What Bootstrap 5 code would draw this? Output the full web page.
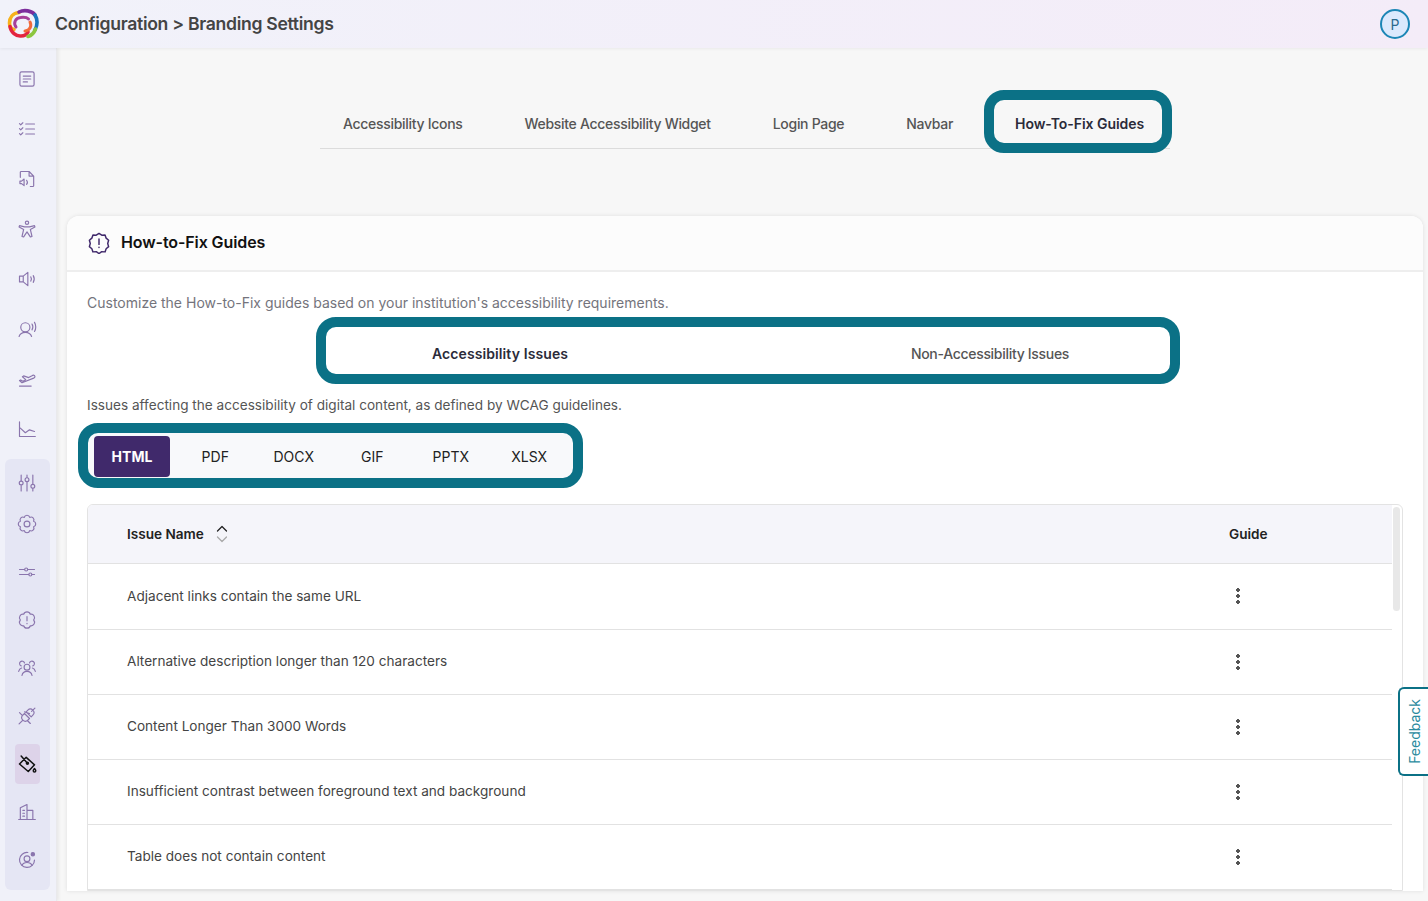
<!DOCTYPE html>
<html lang="en">
<head>
    <meta charset="UTF-8">
    <meta name="viewport" content="width=device-width, initial-scale=1.0">
    <title>Branding Settings</title>
    <link rel="stylesheet" href="https://cdn.jsdelivr.net/npm/bootstrap@5.3.0/dist/css/bootstrap.min.css">
    <style>
        html, body { height: 100%; overflow: hidden; }
        body { font-family: Inter, "Liberation Sans", sans-serif; font-size: 14px; background: #f7f7f7; color: #212529; }

        .topbar { height: 48px; background: linear-gradient(90deg, #f1f2fa, #f4ecf8); box-shadow: 0 1px 3px rgba(0,0,0,.06); position: relative; z-index: 2; padding: 0 18px 0 7px; }
        .page-title { font-size: 17.6px; font-weight: 600; color: #444; margin-left: 16px; letter-spacing: -.3px; }
        .avatar { width: 30px; height: 30px; background: #dbe9fd; border: 2px solid #1c86b6; color: #2b6a8e; font-size: 14px; }

        .sidebar { width: 57px; background: #f0f1f9; border-right: 1px solid #e9e9ec; box-shadow: 2px 0 3px rgba(0,0,0,.06); flex-shrink: 0; padding: 6px 0 0 5px; }
        .side-item { width: 45px; height: 50px; padding-right: 1px; }
        .side-item svg { width: 20px; height: 20px; fill: none; stroke: #8a75ad; stroke-width: 1.4; stroke-linecap: round; stroke-linejoin: round; }
        .side-group { width: 45px; height: 431px; margin-top: 5px; background: #e5e6f4; border-radius: 6px; padding-top: 7px; }
        .side-group .side-item { height: 48px; }
        .side-group .side-item:first-child { height: 34px; }
        .side-group .side-item.active svg { stroke: #111; stroke-width: 1.8; }
        .side-active { width: 25px; height: 40px; background: #ddd3e9; border-radius: 4px; }

        .main { min-width: 0; overflow: hidden; padding: 42px 5px 0 10px; }

        .page-tabs { width: 850px; margin-left: 253px; height: 59px; border-bottom: 1px solid #dcdcdc; }
        .page-tabs .tab { padding: 13px 31px 0; height: 48px; margin-top: 10px; font-weight: 500; color: #555; letter-spacing: -.3px; white-space: nowrap; }
        .page-tabs .tab:first-child { padding-left: 23px; }
        .page-tabs .tab.active { color: #2b2b3a; font-weight: 600; letter-spacing: -.05px; }
        .callout { position: absolute; border: 10px solid #0b7186; border-radius: 20px; pointer-events: none; }
        .tab-callout { top: -10px; bottom: -5px; left: 0; right: 3px; }

        .guide-card { margin-top: 67px; background: #fff; border: 0; border-radius: 12px 12px 0 0; box-shadow: 0 0 4px rgba(0,0,0,.1); }
        .guide-card .card-header { height: 56px; background: #fcfcfc; border-bottom: 2px solid #eeeeee; padding: 0 21px; border-radius: 12px 12px 0 0; }
        .guide-card h1 { font-size: 16px; font-weight: 600; color: #111; margin: 0 0 0 11px; letter-spacing: -.1px; }
        .guide-card .card-body { padding: 21px 20px 0; }
        .lead-text { color: #74747c; line-height: 20px; margin: 0; }

        .type-tabs { position: relative; height: 67px; margin-top: 4px; }
        .type-tabs > div { width: 490px; padding-top: 27px; line-height: 20px; font-weight: 500; color: #555; letter-spacing: -.3px; }
        .type-tabs > div.active { font-weight: 600; color: #2b2b3a; letter-spacing: .1px; }
        .type-callout { top: 0; bottom: 0; left: 229px; right: 223px; }

        .scope-text { color: #555; font-size: 13.6px; line-height: 20px; margin: 11px 0 8px; }
        .format-tabs { width: 505px; height: 65px; margin-left: -9px; border: 10px solid #0b7186; border-radius: 20px; background: #f8f9fb; padding: 3px 0 0 6px; }
        .format-tabs button { width: 78.5px; height: 41px; background: none; border: 0; padding: 0; color: #222; font-size: 14px; }
        .format-tabs button.active { width: 76px; margin-right: 6px; background: #40296b; color: #fff; font-weight: 700; border-radius: 4px; }

        .issue-box { position: relative; margin-top: 16px; border: 1px solid #e3e3e3; border-radius: 6px 6px 0 0; padding-right: 10px; overflow: hidden; }
        .issue-box table { margin: 0; font-size: 13.6px; }
        .issue-box th, .issue-box td { padding: 0 0 0 39px; vertical-align: middle; border-bottom: 1px solid #e2e2e2; color: #444; font-weight: 400; }
        .issue-box thead th { height: 58px; background: #f5f5fa; color: #222; font-weight: 600; }
        .issue-box tbody td { height: 65px; }
        .issue-box tbody tr:first-child td { height: 66px; }
        .issue-box .guide-col { width: 202px; }
        .sort-mark { width: 12px; height: 18px; margin-left: 12px; fill: none; stroke-width: 1.3; stroke-linecap: round; stroke-linejoin: round; }
        .dots { display: block; width: 4px; height: 16px; margin-left: 7px; background: radial-gradient(circle at 2px 2px, #555 1.8px, transparent 2.1px) 0 0 / 4px 6px; }
        .scroll-thumb { position: absolute; top: 2px; right: 2px; width: 7px; height: 104px; background: #e8e8e8; border-radius: 4px; }

        .feedback { position: fixed; right: 0; top: 687px; width: 30px; height: 89px; background: #fff; border: 2px solid #0b7186; border-right: 0; border-radius: 6px 0 0 6px; color: #2a8a9e; z-index: 3; }
        .feedback span { writing-mode: vertical-rl; transform: rotate(180deg); font-size: 14px; }
    </style>
</head>
<body class="d-flex flex-column">
    <header class="topbar d-flex align-items-center flex-shrink-0">
        <svg width="32" height="32" viewBox="0 0 32 32" fill="none" stroke-width="3.6" stroke-linecap="round" aria-label="logo">
            <path d="M12 4.500C6 5 2.500 9.500 2.500 15c0 3.500 2 6 4.500 6.500" stroke="#f7b21b"/>
            <path d="M3 18.500c1 6 6 10 11 9.500 4 0 6-2 7-4" stroke="#e3243f"/>
            <path d="M12 4c5-2.500 13-1.500 16 3" stroke="#7c2d9c"/>
            <path d="M28 7c3 5 2 11 0 15" stroke="#1b75bb"/>
            <path d="M28.500 21c-1.500 4-4 6.500-7.500 7.500" stroke="#8cc63f"/>
            <path d="M9 19c-3-4-.5-9 4.500-9.500 4-.5 7 .500 8 1.500" stroke="#a63f98" stroke-width="3"/>
            <path d="M23 14c2 4 0 8.500-5 9" stroke="#f26b3a" stroke-width="3"/>
        </svg>
        <div class="page-title">Configuration &gt; Branding Settings</div>
        <div class="avatar rounded-circle d-flex align-items-center justify-content-center ms-auto">P</div>
    </header>

    <div class="d-flex flex-grow-1" style="min-height:0">
        <nav class="sidebar">
            <div class="side-item d-flex align-items-center justify-content-center"><svg viewBox="0 0 24 24"><rect x="3.500" y="3.500" width="17" height="17" rx="2"/><path d="M7.500 8.500h9M7.500 12h9M7.500 15.500h5"/></svg></div>
            <div class="side-item d-flex align-items-center justify-content-center"><svg viewBox="0 0 24 24"><path d="M3 5.500l1.500 1.500 2.500-2.500M3 11.500l1.500 1.500 2.500-2.500M3 17.500l1.500 1.500 2.500-2.500M10.500 6h10.500M10.500 12h10.500M10.500 18h10.500"/></svg></div>
            <div class="side-item d-flex align-items-center justify-content-center"><svg viewBox="0 0 24 24"><path d="M4 10V4a1 1 0 0 1 1-1h9.500L20 8.500V20a1 1 0 0 1-1 1h-3M14.500 3v5.500H20M3.500 14.500h2l3-2.500v8l-3-2.500h-2zM11.500 13.500c1.200 1.500 1.200 3.500 0 5"/></svg></div>
            <div class="side-item d-flex align-items-center justify-content-center"><svg viewBox="0 0 24 24"><circle cx="12" cy="4.500" r="2"/><path d="M3 8l6 1.500h6L21 8l.5 1.500-5.500 3 2 8.500-2 .5-4-6-4 6-2-.5 2-8.500-5.500-3z"/></svg></div>
            <div class="side-item d-flex align-items-center justify-content-center"><svg viewBox="0 0 24 24"><path d="M3 8.500h4.500L13 4v16l-5.500-4.500H3zM7.500 8.500v7M16.500 9.500c1 1.500 1 3.500 0 5M19.500 8c1.500 2.500 1.500 5.500 0 8"/></svg></div>
            <div class="side-item d-flex align-items-center justify-content-center"><svg viewBox="0 0 24 24"><circle cx="10" cy="10" r="5.500"/><path d="M2.500 21c1-3 3.500-5 7.500-5s6.500 2 7.500 5M18 6c1.200 2 1.200 5 0 7M21 4c2 3 2 8 0 11"/></svg></div>
            <div class="side-item d-flex align-items-center justify-content-center"><svg viewBox="0 0 24 24"><path d="M3 20.500h14M6 16.500L20 11c1.500-.7 2-2 1-3-.8-.8-2-.7-3 0l-4 2.300-6-2-1.500 1 4 3.500-3.500 1.800-2.500-1.500-1.500.7z"/></svg></div>
            <div class="side-item d-flex align-items-center justify-content-center"><svg viewBox="0 0 24 24"><path d="M3 3.500v17.500h19M4 11l6 5.500 5-3.500 6 2"/></svg></div>

            <div class="side-group">
                <div class="side-item d-flex align-items-center justify-content-center"><svg viewBox="0 0 24 24"><path d="M5 2.500v7M5 15v6.500M12 2.500v3M12 11v10.500M19 2.500v11M19 18.500v3"/><circle cx="5" cy="12" r="2.300"/><circle cx="12" cy="8" r="2.300"/><circle cx="19" cy="16" r="2.300"/></svg></div>
                <div class="side-item d-flex align-items-center justify-content-center"><svg viewBox="0 0 24 24"><path d="M15.300 4.100A3.400 3.400 0 0 1 19.900 8.700A3.400 3.400 0 0 1 19.900 15.300A3.400 3.400 0 0 1 15.300 19.900A3.400 3.400 0 0 1 8.700 19.900A3.400 3.400 0 0 1 4.100 15.300A3.400 3.400 0 0 1 4.100 8.700A3.400 3.400 0 0 1 8.700 4.100A3.400 3.400 0 0 1 15.300 4.100z"/><circle cx="12" cy="12" r="3.500"/></svg></div>
                <div class="side-item d-flex align-items-center justify-content-center"><svg viewBox="0 0 24 24"><path d="M3 9h6M13 9h8M3 15h11M18 15h3"/><circle cx="11" cy="9" r="1.800"/><circle cx="16" cy="15" r="1.800"/></svg></div>
                <div class="side-item d-flex align-items-center justify-content-center"><svg viewBox="0 0 24 24"><path d="M8 5.100A4.200 4.200 0 0 1 16 5.100A4.200 4.200 0 0 1 20 12A4.200 4.200 0 0 1 16 18.900A4.200 4.200 0 0 1 8 18.900A4.200 4.200 0 0 1 4 12A4.200 4.200 0 0 1 8 5.100zM12 8v5M12 16v.5"/></svg></div>
                <div class="side-item d-flex align-items-center justify-content-center"><svg viewBox="0 0 24 24"><circle cx="12" cy="11" r="3.500"/><path d="M6 21c.5-3 2.500-5 6-5s5.500 2 6 5M9 6a3 3 0 1 0-4 3.500M15 6a3 3 0 1 1 4 3.500M2 16c.5-2 1.500-3.500 3.500-4M22 16c-.5-2-1.500-3.500-3.500-4"/></svg></div>
                <div class="side-item d-flex align-items-center justify-content-center"><svg viewBox="0 0 24 24"><path d="M2.500 21.500l4-4M21.500 2.500l-4 4M9 9l6 6-2 2c-2 2-4 2-6 0s-2-4 0-6zM15 9l-6-2M11 7l2-2c2-2 4-2 6 0s2 4 0 6l-2 2zM6 11l-3-3M13 18l3 3"/></svg></div>
                <div class="side-item active d-flex align-items-center justify-content-center">
                    <div class="side-active d-flex align-items-center justify-content-center"><svg viewBox="0 0 24 24"><path d="M11 4l10 9-7.500 8L3 12zM5 2.500l7.500 8.500"/><circle cx="12.500" cy="11" r="1.200"/><path d="M21 17.500c1 1.200 1.500 2 1.500 2.700a1.500 1.500 0 0 1-3 0c0-.7.5-1.500 1.500-2.700z"/></svg></div>
                </div>
                <div class="side-item d-flex align-items-center justify-content-center"><svg viewBox="0 0 24 24"><path d="M2 21h20M4 21V7l8-4v18M12 10h7v11M7 10h2M7 13.500h2M7 17h2"/></svg></div>
                <div class="side-item d-flex align-items-center justify-content-center"><svg viewBox="0 0 24 24"><path d="M21 12a9 9 0 1 1-8-9"/><circle cx="12" cy="10.500" r="3.500"/><path d="M6 18.500c1-2.500 3-3.500 6-3.500s5 1 6 3.500"/><circle cx="19" cy="5" r="2" fill="#8a75ad"/></svg></div>
            </div>
        </nav>

        <main class="main flex-grow-1">
            <div class="page-tabs d-flex">
                <div class="tab">Accessibility Icons</div>
                <div class="tab">Website Accessibility Widget</div>
                <div class="tab">Login Page</div>
                <div class="tab">Navbar</div>
                <div class="tab active position-relative">How-To-Fix Guides<span class="callout tab-callout"></span></div>
            </div>

            <section class="card guide-card">
                <div class="card-header d-flex align-items-center">
                    <svg width="22" height="22" viewBox="0 0 24 24" fill="none" stroke="#40296b" stroke-width="1.6" stroke-linecap="round" stroke-linejoin="round">
                        <path d="M12 1.500l3 2 3.600-.2 1.200 3.400 2.700 2.300-1 3.500 1 3.500-2.700 2.300-1.200 3.400-3.600-.2-3 2-3-2-3.600.2-1.200-3.400L1.500 16l1-3.500-1-3.500 2.700-2.300 1.200-3.400L9 3.500z"/>
                        <path d="M12 7.500v6M12 16.500v.5"/>
                    </svg>
                    <h1>How-to-Fix Guides</h1>
                </div>
                <div class="card-body">
                    <p class="lead-text">Customize the How-to-Fix guides based on your institution's accessibility requirements.</p>
                    <div class="type-tabs d-flex justify-content-center text-center">
                        <div class="active">Accessibility Issues</div>
                        <div>Non-Accessibility Issues</div>
                        <span class="callout type-callout"></span>
                    </div>
                    <p class="scope-text">Issues affecting the accessibility of digital content, as defined by WCAG guidelines.</p>
                    <div class="format-tabs d-flex">
                        <button class="active">HTML</button>
                        <button>PDF</button>
                        <button>DOCX</button>
                        <button>GIF</button>
                        <button>PPTX</button>
                        <button>XLSX</button>
                    </div>
                    <div class="issue-box">
                        <table class="table">
                            <thead>
                                <tr>
                                    <th><span class="d-inline-flex align-items-center">Issue Name
                                        <svg class="sort-mark" viewBox="0 0 12 18"><path d="M1.500 6L6 1.500 10.500 6" stroke="#222"/><path d="M1.500 12L6 16.500 10.500 12" stroke="#aaa"/></svg></span></th>
                                    <th class="guide-col">Guide</th>
                                </tr>
                            </thead>
                            <tbody>
                                <tr><td>Adjacent links contain the same URL</td><td><span class="dots"></span></td></tr>
                                <tr><td>Alternative description longer than 120 characters</td><td><span class="dots"></span></td></tr>
                                <tr><td>Content Longer Than 3000 Words</td><td><span class="dots"></span></td></tr>
                                <tr><td>Insufficient contrast between foreground text and background</td><td><span class="dots"></span></td></tr>
                                <tr><td>Table does not contain content</td><td><span class="dots"></span></td></tr>
                            </tbody>
                        </table>
                        <div class="scroll-thumb"></div>
                    </div>
                </div>
            </section>
        </main>
    </div>

    <div class="feedback d-flex align-items-center justify-content-center"><span>Feedback</span></div>

    <script src="https://cdn.jsdelivr.net/npm/bootstrap@5.3.0/dist/js/bootstrap.bundle.min.js"></script>
</body>
</html>
